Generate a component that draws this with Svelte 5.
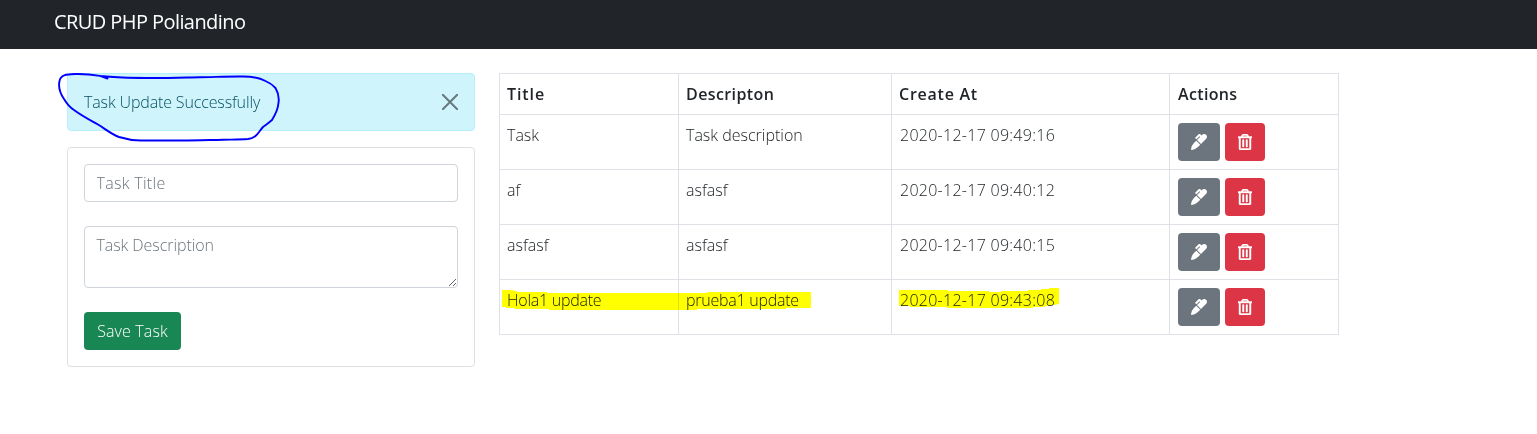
<script>
  const tasks = [
    { title: 'Task', description: 'Task description', created: '2020-12-17 09:49:16' },
    { title: 'af', description: 'asfasf', created: '2020-12-17 09:40:12' },
    { title: 'asfasf', description: 'asfasf', created: '2020-12-17 09:40:15' },
    { title: 'Hola1 update', description: 'prueba1 update', created: '2020-12-17 09:43:08' }
  ];
</script>

<div class="page">
  <nav><span class="brand">CRUD PHP Poliandino</span></nav>

  <main>
    <section class="side">
      <div class="alert">
        <span class="message">Task Update Successfully</span>
        <button class="close" aria-label="Close">
          <svg width="16" height="16" viewBox="0 0 16 16"><path d="M.8.8l14.4 14.4M15.2.8L.8 15.2" fill="none" stroke="#000" stroke-width="2" stroke-linecap="round" /></svg>
        </button>
      </div>
      <form class="card">
        <input class="field" type="text" placeholder="Task Title" />
        <textarea class="field" rows="2" placeholder="Task Description"></textarea>
        <button type="button" class="btn save">Save Task</button>
      </form>
    </section>

    <table>
      <colgroup><col class="c1" /><col class="c2" /><col class="c3" /><col class="c4" /></colgroup>
      <thead>
        <tr><th><span class="h1">Title</span></th><th><span class="h2">Descripton</span></th><th><span class="h3">Create At</span></th><th><span class="h4">Actions</span></th></tr>
      </thead>
      <tbody>
        {#each tasks as task}
          <tr>
            <td class:tight={task.title.length > 6}>{task.title}</td>
            <td class:tight={task.description.startsWith('prueba')}>{task.description}</td>
            <td class="date">{task.created}</td>
            <td>
              <div class="actions">
                <button class="btn edit" aria-label="Edit">
                  <svg width="16" height="16" viewBox="0 0 512 512"><path fill="currentColor" d="M93.95 290.03A327.038 327.038 0 0 0 .17 485.11l-.03.23c-1.7 15.28 11.21 28.2 26.49 26.51a327.02 327.02 0 0 0 195.34-93.8l75.4-75.4-128.02-128.02-75.4 75.4zM485.49 26.51c-35.35-35.35-92.67-35.35-128.02 0l-21.76 21.76-36.56-36.55c-15.62-15.62-40.95-15.62-56.56 0L138.47 115.84c-6.25 6.25-6.25 16.38 0 22.63l22.62 22.62c6.25 6.25 16.38 6.25 22.63 0l87.15-87.15 19.59 19.59L191.98 192 320 320.02l165.49-165.49c35.35-35.35 35.35-92.66 0-128.02z" /></svg>
                </button>
                <button class="btn delete" aria-label="Delete">
                  <svg width="14" height="16" viewBox="0 0 448 512"><path fill="currentColor" stroke="currentColor" stroke-width="14" d="M268 416h24a12 12 0 0 0 12-12V188a12 12 0 0 0-12-12h-24a12 12 0 0 0-12 12v216a12 12 0 0 0 12 12zM432 80h-82.41l-34-56.7A48 48 0 0 0 274.41 0H173.59a48 48 0 0 0-41.16 23.3L98.41 80H16A16 16 0 0 0 0 96v16a16 16 0 0 0 16 16h16v336a48 48 0 0 0 48 48h288a48 48 0 0 0 48-48V128h16a16 16 0 0 0 16-16V96a16 16 0 0 0-16-16zM171.84 50.91A6 6 0 0 1 177 48h94a6 6 0 0 1 5.15 2.91L293.61 80H154.39zM368 464H80V128h288zm-212-48h24a12 12 0 0 0 12-12V188a12 12 0 0 0-12-12h-24a12 12 0 0 0-12 12v216a12 12 0 0 0 12 12z" /></svg>
                </button>
              </div>
            </td>
          </tr>
        {/each}
      </tbody>
    </table>
  </main>

  <!-- Hand-drawn annotations over the page -->
  <svg class="marks highlight" width="1537" height="434" viewBox="0 0 1537 434">
    <path fill="#ff0" d="M502 290H511L517 291V292H547V293H707V292H811V308H786V309H697V310H549V309H515V308H506V307H502ZM899 290H948V291H989V292H1001V291H1028V290H1041V289H1049V288H1059V304L1054 305L1045 306V307H1033V308H947V307H910V306H899Z" />
  </svg>
  <svg class="marks" width="1537" height="434" viewBox="0 0 1537 434">
    <path fill="none" stroke="#00f" stroke-width="1.9" stroke-linecap="round" stroke-linejoin="round" d="M107.500 78.500L100 75.900C92 74.500 83 73.800 75 74C66 74.200 60.500 75 59.500 81C58 88 60.500 94 64 99C67 104 70 107.500 74 110C82 116 90 120 98 124.500C106 129.500 111 134 119 137C127 139.500 132 140.500 141 140.500H177C193 140.700 208 140 223 139.700C233 139.500 241 139.600 248 139C257 138 259 131 263 127C266 125 269 122.500 272 120C275 115 278 110 278.300 104C279.500 98 278.500 93 275.500 88C272 84 269 82.500 265.500 81C258 77 250 76.500 243 76.500C228 76.300 215 77 200 77.200C185 77.500 170 78 153 78C138 78 119 77.600 110 76.800L100 75.900" />
  </svg>
</div>

<style>
  :global(body) { background: #fff; }
  .page, .page * { box-sizing: border-box; }
  .page {
    position: relative;
    height: 434px;
    overflow: hidden;
    font: 300 16px/24px "Open Sans", "Noto Sans", sans-serif;
    color: #212529;
  }
  nav { height: 49px; padding: 7px 54px; background: #212529; color: #fff; }
  .brand { display: block; font-size: 20px; line-height: 30px; font-weight: 400; letter-spacing: -0.58px; }
  main { display: flex; gap: 24px; align-items: flex-start; padding: 24px 67px; }
  .side { width: 408px; display: grid; gap: 16px; }
  .alert {
    display: flex; justify-content: space-between; align-items: center;
    height: 58px; padding: 0 16px;
    background: #cff4fc; border: 1px solid #b6effb; border-radius: 4px; color: #055160;
  }
  .message { letter-spacing: -0.14px; }
  .close { display: flex; padding: 0; border: 0; background: none; opacity: .5; }
  .card {
    height: 220px; padding: 16px; display: flex; flex-direction: column; align-items: flex-start; gap: 24px;
    border: 1px solid #dfdfdf; border-radius: 4px;
  }
  .field {
    display: block; width: 100%; height: 38px; margin: 0; padding: 6px 11.5px;
    border: 1px solid #ced4da; border-radius: 4px; background: #fff;
    font: inherit; color: #212529; letter-spacing: 0.3px;
  }
  textarea.field { height: 62px; resize: vertical; overflow: hidden; letter-spacing: -0.07px; }
  .field::placeholder { color: #6c757d; opacity: 1; }
  .btn {
    display: flex; align-items: center; justify-content: center;
    height: 38px; padding: 0 13px; border: 0; border-radius: 4px;
    font: inherit; color: #fff;
  }
  .save { width: 97px; padding: 0; background: #198754; white-space: nowrap; letter-spacing: 0.12px; }
  table { width: 840px; table-layout: fixed; border-collapse: collapse; }
  .c1 { width: 179px; }
  .c2 { width: 213px; }
  .c3 { width: 278px; }
  .c4 { width: 169px; }
  th, td { border: 1px solid #dee2e6; padding: 8px; vertical-align: top; text-align: left; white-space: nowrap; }
  th:nth-child(-n+3), td:nth-child(-n+2) { padding-left: 7px; }
  th { height: 41px; font-weight: 600; }
  .h1 { letter-spacing: 0.9px; }
  .h2 { letter-spacing: 0.4px; }
  .h3 { letter-spacing: 0.75px; }
  .h4 { letter-spacing: 0.35px; }
  td { height: 55px; }
  .tight { letter-spacing: -0.25px; }
  .date { letter-spacing: 0.27px; }
  .actions { display: flex; gap: 5px; }
  .edit { background: #6c757d; }
  .delete { background: #dc3545; }
  .marks { position: absolute; left: 0; top: 0; pointer-events: none; }
  .highlight { mix-blend-mode: multiply; }
</style>
